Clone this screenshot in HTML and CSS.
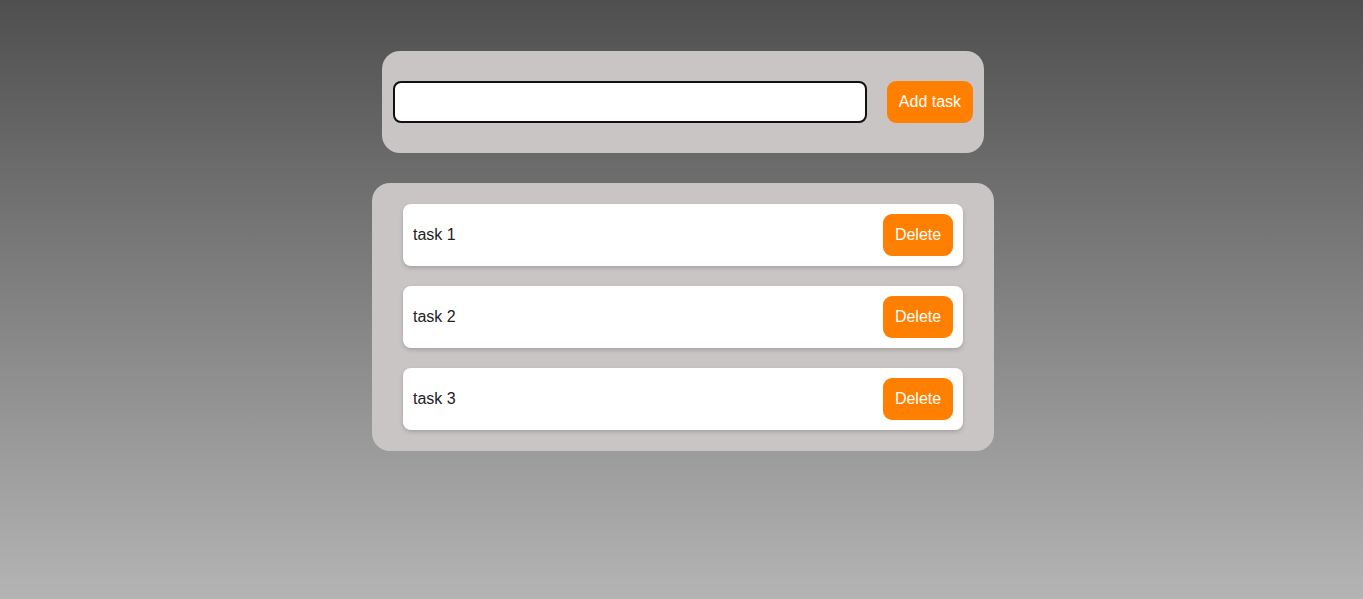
FILE: index.html
```html
<!DOCTYPE html>
<html>
<head>
<meta charset="utf-8">
<link rel="stylesheet" href="styles.css">
</head>
<body>
<main class="app">
  <form class="add-card">
    <input class="task-input" type="text">
    <button class="btn add-btn" type="button">Add task</button>
  </form>
  <ul class="list-card">
    <li class="task"><span class="task-text">task 1</span><button class="btn del-btn" type="button">Delete</button></li>
    <li class="task"><span class="task-text">task 2</span><button class="btn del-btn" type="button">Delete</button></li>
    <li class="task"><span class="task-text">task 3</span><button class="btn del-btn" type="button">Delete</button></li>
  </ul>
</main>
</body>
</html>
```

FILE: styles.css
```css
html, body {
  margin: 0;
  height: 100%;
}
body {
  background: linear-gradient(#4f4f4f, #b4b4b4);
  font-family: "Liberation Sans", Arial, sans-serif;
  font-size: 16px;
}
.app {
  display: flex;
  flex-direction: column;
  align-items: center;
  padding-top: 51px;
  padding-left: 3px;
  gap: 30px;
}
.add-card {
  box-sizing: border-box;
  width: 602px;
  height: 102px;
  margin: 0;
  padding: 0 11px;
  background: #cac5c5;
  border-radius: 18px;
  display: flex;
  align-items: center;
  gap: 20px;
}
.task-input {
  box-sizing: border-box;
  width: 474px;
  height: 42px;
  border: 2px solid #111;
  border-radius: 8px;
  background: #fff;
  outline: none;
  padding: 0 8px;
  font: inherit;
}
.btn {
  box-sizing: border-box;
  height: 42px;
  border: none;
  border-radius: 9px;
  background: #ff7f00;
  color: #fff;
  font-family: "Liberation Sans", Arial, sans-serif;
  font-size: 16px;
  padding: 0;
  cursor: pointer;
}
.add-btn {
  width: 86px;
}
.list-card {
  box-sizing: border-box;
  width: 622px;
  margin: 0;
  padding: 21px 31px;
  list-style: none;
  background: #cac5c5;
  border-radius: 18px;
  display: flex;
  flex-direction: column;
  gap: 20px;
}
.task {
  box-sizing: border-box;
  height: 62px;
  padding: 10px;
  background: #fff;
  border-radius: 8px;
  display: flex;
  align-items: center;
  justify-content: space-between;
  box-shadow: 0 2px 4px rgba(0, 0, 0, 0.18);
}
.task-text {
  color: #222;
}
.del-btn {
  width: 70px;
}
```
